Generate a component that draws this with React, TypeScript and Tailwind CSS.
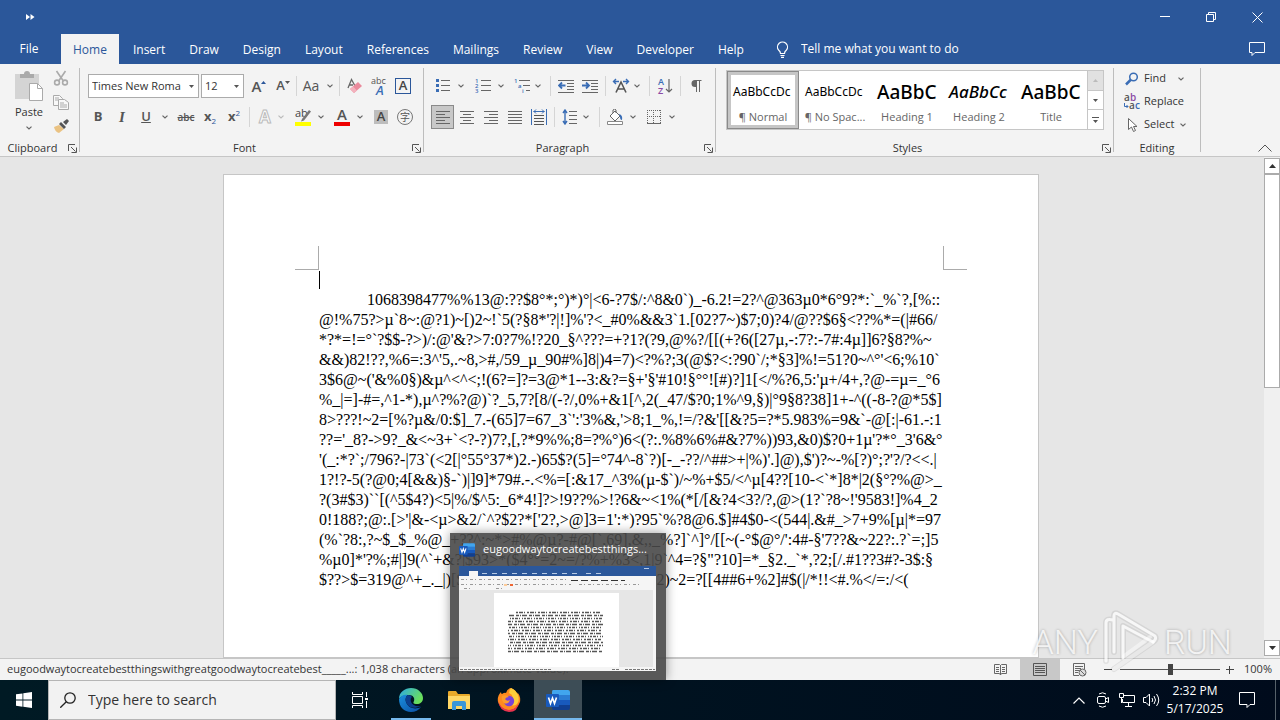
import React from 'react';

const TABS = ['Home', 'Insert', 'Draw', 'Design', 'Layout', 'References', 'Mailings', 'Review', 'View', 'Developer', 'Help'];

const LINES = [
    "1068398477%%13@:??$8°*;°)*)°|<6-?7$/:^8&0`)_-6.2!=2?^@363µ0*6°9?*:`_%`?,[%::",
    "@!%75?>µ`8~:@?1)~[)2~!`5(?§8*'?|!]%'?<_#0%&&3`1.[02?7~)$7;0)?4/@??$6§<??%*=(|#66/",
    "*?*=!=°`?$$-?>)/:@'&?>7:0?7%!?20_§^???=+?1?(?9,@%?/[[(+?6([27µ,-:7?:-7#:4µ]]6?§8?%~",
    "&&)82!??,%6=:3^'5,.~8,>#,/59_µ_90#%]8|)4=7)<?%?;3(@$?<:?90`/;*§3]%!=51?0~^°'<6;%10`",
    "3$6@~('&%0§)&µ^<^<;!(6?=]?=3@*1--3:&?=§+'§'#10!§°°![#)?]1[</%?6,5:'µ+/4+,?@-=µ=_°6",
    "%_|=]-#=,^1-*),µ^?%?@)`?_5,7?[8/(-?/,0%+&1[^,2(_47/$?0;1%^9,§)|°9§8?38]1+-^((-8-?@*5$]",
    "8>???!~2=[%?µ&/0:$]_7.-(65]7=67_3`':'3%&,'>8;1_%,!=/?&'[[&?5=?*5.983%=9&`-@[:|-61.-:1",
    "??='_8?->9?_&<~3+`<?-?)7?,[,?*9%%;8=?%°)6<(?:.%8%6%#&?7%))93,&0)$?0+1µ'?*°_3'6&°",
    "'(_:*?`;/796?-|73`(<2[|°55°37*)2.-)65$?(5]=°74^-8`?)[-_-??/^##>+|%)'.]@),$')?~-%[?)°;?'?/?<<.|",
    "1?!?-5(?@0;4[&&)§-`)|]9]*79#.-.<%=[:&17_^3%(µ-$`)/~%+$5/<^µ[4??[10-<`*]8*|2(§°?%@>_",
    "?(3#$3)``[(^5$4?)<5|%/$^5:_6*4!]?>!9??%>!?6&~<1%(*[/[&?4<3?/?,@>(1?`?8~!'9583!]%4_2",
    "0!188?;@:.[>'|&-<µ>&2/`^?$2?*['2?,>@]3=1':*)?95`%?8@6.$]#4$0-<(544|.&#_>7+9%[µ|*=97",
    "(%`?8:,?~$_$_%@_+??^:~*>#%@µ?-#@[`,69],&,,_%?]`^]°/[[~(-°$@°/':4#-§'7??&~22?:.?`=;]5",
    "%µ0]*'?%;#|]9(^`+&?|$93>*($4°°=2~=/?%+%3<,1|9`^4=?§\"?10]=*_§2._`*,?2;[/.#1??3#?-3$:§",
];

const STYLES = [
    { name: '¶ Normal', sample: 'AaBbCcDc', look: 'text-xs' },
    { name: '¶ No Spac...', sample: 'AaBbCcDc', look: 'text-xs' },
    { name: 'Heading 1', sample: 'AaBbC', look: 'text-[19px] font-medium' },
    { name: 'Heading 2', sample: 'AaBbCc', look: 'text-[17px] font-medium italic' },
    { name: 'Title', sample: 'AaBbC', look: 'text-[19px] font-medium' },
];

function Chevron({ faded = false }: { faded?: boolean }) {
    return (
        <svg width="6" height="4" viewBox="0 0 6 4" fill="none" stroke={faded ? '#bbb' : '#666'} strokeWidth="1.2">
            <path d="M.5.6 3 3 5.5.6" />
        </svg>
    );
}

function More({ label, className = 'w-3', faded }: { label: string; className?: string; faded?: boolean }) {
    return (
        <button aria-label={label} className={`flex h-6 shrink-0 items-center justify-center ${className}`}>
            <Chevron faded={faded} />
        </button>
    );
}

function Tool({ label, className = 'w-6', children }: { label: string; className?: string; children: React.ReactNode }) {
    return (
        <button aria-label={label} className={`flex h-6 shrink-0 items-center justify-center ${className}`}>
            {children}
        </button>
    );
}

function Sep({ className = 'mx-1' }: { className?: string }) {
    return <div className={`h-5 w-px shrink-0 bg-[#d5d5d5] ${className}`} />;
}

function Group({ name, className, launcher = true, children }: { name: string; className: string; launcher?: boolean; children: React.ReactNode }) {
    return (
        <section className={`flex shrink-0 flex-col ${className}`}>
            <div className="h-[76px]">{children}</div>
            <div className="flex h-4 items-center text-[11px] text-[#333]">
                <span className="flex-1 text-center">{name}</span>
                {launcher && (
                    <button aria-label={`${name} settings`} className="flex w-[14px] justify-end pr-[2px]">
                        <svg width="9" height="9" viewBox="0 0 9 9" fill="none" stroke="#555">
                            <path d="M.5 7V.5H7M3 3l4.5 4.5M8.5 3.5v5h-5" />
                        </svg>
                    </button>
                )}
            </div>
        </section>
    );
}

function Divider() {
    return <div className="my-1 w-px shrink-0 bg-[#bdbdbd]" />;
}

// horizontal rules used by the alignment and indent icons: [x1, x2] per row
function Rules({ rows, width = 16, step = 3, children }: { rows: [number, number][]; width?: number; step?: number; children?: React.ReactNode }) {
    return (
        <svg width={width} height="16" viewBox={`0 0 ${width} 16`} fill="none" stroke="#666" strokeWidth="1">
            {rows.map(([a, b], i) => (
                <path key={i} d={`M${a} ${2.5 + i * step}H${b}`} />
            ))}
            {children}
        </svg>
    );
}

function ClipboardGroup() {
    return (
        <Group name="Clipboard" className="w-[79px]">
            <div className="flex pt-[6px] pl-2">
                <button className="flex w-[42px] flex-col items-center text-[11px] text-[#333]">
                    <svg width="30" height="32" viewBox="0 0 30 32" fill="none">
                        <path d="M1 4h24v25H1z" fill="#d4d4d4" />
                        <path d="M6 4h4a3 3 0 0 1 6 0h4v4H6z" fill="#aaa" />
                        <path d="M15.5 13.500h8l5 5v12h-13z" fill="#fff" stroke="#aaa" />
                        <path d="M23.500 13.500v5h5" stroke="#aaa" />
                    </svg>
                    <span className="mt-[2px] leading-4">Paste</span>
                    <span className="mt-[6px]"><Chevron /></span>
                </button>
                <div className="-mt-1 flex flex-col">
                    <Tool label="Cut" className="w-[22px]">
                        <svg width="16" height="16" viewBox="0 0 16 16" fill="none" stroke="#aaa" strokeWidth="1.6">
                            <path d="M3.500 1 10 10.500M12.500 1 6 10.500" />
                            <circle cx="4" cy="12.500" r="2.400" /><circle cx="12" cy="12.500" r="2.400" />
                        </svg>
                    </Tool>
                    <Tool label="Copy" className="w-[22px]">
                        <svg width="16" height="15" viewBox="0 0 16 15" stroke="#aaa" fill="#f8f8f8">
                            <path d="M.5.500h6l3 3v7h-9z" />
                            <path d="M5.500 4.500h6l4 3v7h-10z" />
                            <path d="M7 8h4M7 10h7M7 12h7M2 3h4M2 5h3" />
                        </svg>
                    </Tool>
                    <Tool label="Format Painter" className="w-[22px]">
                        <svg width="16" height="14" viewBox="0 0 16 14">
                            <path d="m1 8 5-2 5 4-5 4q-4-1-5-6z" fill="#eac282" />
                            <path d="m6 5 2-2 5 5-2 2zM10 3l4-3 2 2-3 4z" fill="#555" />
                        </svg>
                    </Tool>
                </div>
            </div>
        </Group>
    );
}

function Combo({ label, value, className }: { label: string; value: string; className: string }) {
    return (
        <div className={`relative h-6 shrink-0 border border-[#ababab] bg-white ${className}`}>
            <select aria-label={label} className="block h-full w-full appearance-none bg-white pl-[3px] text-[11px] text-[#333] outline-none">
                <option>{value}</option>
            </select>
            <svg className="pointer-events-none absolute top-[10px] right-1" width="5" height="3" viewBox="0 0 5 3">
                <path d="M0 0h5L2.500 3z" fill="#555" />
            </svg>
        </div>
    );
}

function FontGroup() {
    return (
        <Group name="Font" className="w-[343px]">
            <div className="flex items-center pt-[10px] pl-2">
                <Combo label="Font" value="Times New Roma" className="w-[111px]" />
                <Combo label="Font size" value="12" className="ml-[2px] w-[43px]" />
                <Tool label="Grow font" className="ml-[3px] w-6 text-[#555]">
                    <span className="text-[15px] font-semibold">A</span>
                    <svg className="mb-2" width="5" height="3" viewBox="0 0 5 3"><path d="M0 3h5L2.500 0z" fill="#2b579a" /></svg>
                </Tool>
                <Tool label="Shrink font" className="w-6 text-[#555]">
                    <span className="text-[13px] font-semibold">A</span>
                    <svg className="mb-2" width="5" height="3" viewBox="0 0 5 3"><path d="M0 0h5L2.500 3z" fill="#555" /></svg>
                </Tool>
                <Sep className="mx-[1px]" />
                <Tool label="Change case" className="w-[26px] text-sm text-[#555]">Aa</Tool>
                <More label="Case options" className="w-3" />
                <Sep className="mx-[3px]" />
                <Tool label="Clear formatting">
                    <svg width="16" height="16" viewBox="0 0 16 16">
                        <path d="M1 10 4.500 1.500 8 8M2.500 7H6" fill="none" stroke="#666" strokeWidth="1.300" />
                        <path d="m3 11 8-7 4 4-8 7z" fill="#ea8a9c" /><path d="m3 11 3-2.500 4 4L7 15z" fill="#f3b2bd" />
                    </svg>
                </Tool>
                <Tool label="Phonetic guide">
                    <svg width="18" height="20" viewBox="0 0 18 20" fontFamily="Open Sans">
                        <text x="1" y="8" fontSize="9" fill="#555">abc</text>
                        <text x="6" y="19" fontSize="13" fontWeight="600" fontStyle="italic" fill="#3a6db5">A</text>
                    </svg>
                </Tool>
                <Tool label="Character border">
                    <span className="flex size-4 items-center justify-center border border-[#2b579a] text-[13px] font-semibold text-[#444]">A</span>
                </Tool>
            </div>
            <div className="flex items-center pt-[7px] pl-[6px] text-[#555]">
                <Tool label="Bold"><b className="text-[13px]">B</b></Tool>
                <Tool label="Italic"><i className="font-['Liberation_Serif'] text-[15px] font-bold">I</i></Tool>
                <Tool label="Underline"><u className="text-[13px] font-semibold">U</u></Tool>
                <More label="Underline options" className="w-[14px]" />
                <Tool label="Strikethrough" className="ml-[2px] w-6"><s className="text-[10px] font-semibold">abc</s></Tool>
                <Tool label="Subscript"><b className="text-[13px]">x</b><span className="mt-2 text-[8px] text-[#2b579a]">2</span></Tool>
                <Tool label="Superscript"><b className="text-[13px]">x</b><span className="mb-2 text-[8px] text-[#2b579a]">2</span></Tool>
                <Sep className="mx-[3px]" />
                <Tool label="Text effects">
                    <svg width="16" height="18" viewBox="0 0 16 18" fontFamily="Open Sans">
                        <text x="2" y="15" fontSize="17" fontWeight="700" fill="#fafafa" stroke="#bbb">A</text>
                    </svg>
                </Tool>
                <More label="Text effect options" className="w-2" faded />
                <Tool label="Highlight" className="ml-[6px] w-6">
                    <svg width="18" height="18" viewBox="0 0 18 18" fontFamily="Open Sans">
                        <text x="1" y="9" fontSize="11" fill="#444">ab</text>
                        <path d="m8 11 7-9 2 1.500-7 9-3 1z" fill="#777" /><path d="M1 14h16v4H1z" fill="#ff0" />
                    </svg>
                </Tool>
                <More label="Highlight colors" />
                <Tool label="Font color" className="ml-[3px] w-6">
                    <svg width="16" height="18" viewBox="0 0 16 18" fontFamily="Open Sans">
                        <text x="3" y="12" fontSize="15" fontWeight="600" fill="#555">A</text><path d="M0 14h16v4H0z" fill="#e00" />
                    </svg>
                </Tool>
                <More label="Font colors" />
                <Tool label="Character shading" className="ml-[3px] w-6">
                    <span className="flex size-[14px] items-center justify-center bg-[#bdbdbd] text-[13px] font-semibold text-[#444]">A</span>
                </Tool>
                <Tool label="Enclose characters">
                    <span className="flex size-4 items-center justify-center rounded-full border border-[#777] font-['Noto_Sans_CJK_SC',sans-serif] text-[10px] leading-none">字</span>
                </Tool>
            </div>
        </Group>
    );
}

function ParagraphGroup() {
    const full: [number, number][] = [[1, 15], [1, 15], [1, 15], [1, 15], [1, 15]];
    return (
        <Group name="Paragraph" className="w-[291px]">
            <div className="flex items-center pt-[10px] pl-[7px]">
                <Tool label="Bullets">
                    <Rules rows={[[6, 15], [6, 15], [6, 15]]} step={5}>
                        <path d="M1 2.500h3M1 7.500h3M1 12.500h3" stroke="#3a6db5" strokeWidth="3" />
                    </Rules>
                </Tool>
                <More label="Bullet library" />
                <Tool label="Numbering" className="ml-1 w-6">
                    <Rules rows={[[6, 16], [6, 16], [6, 16]]} step={5}>
                        <g fill="#3a6db5" stroke="none" fontSize="6" fontFamily="Open Sans" fontWeight="600">
                            <text x="0" y="5">1</text><text x="0" y="10">2</text><text x="0" y="15">3</text>
                        </g>
                    </Rules>
                </Tool>
                <More label="Number library" />
                <Tool label="Multilevel list" className="ml-[3px] w-6">
                    <Rules rows={[[5, 16], [9, 16], [12, 16]]} step={5}>
                        <g fill="#3a6db5" stroke="none" fontSize="6" fontFamily="Open Sans" fontWeight="600">
                            <text x="0" y="5">1</text><text x="4" y="10">a</text><text x="8" y="15">i</text>
                        </g>
                    </Rules>
                </Tool>
                <More label="List library" className="w-2" />
                <Sep className="ml-2 mr-[3px]" />
                <Tool label="Decrease indent">
                    <Rules rows={[[0, 16], [9, 16], [9, 16], [9, 16], [0, 16]]}>
                        <path d="M7.500 7.500H1M4 4.500l-3 3 3 3" stroke="#3a6db5" strokeWidth="1.800" />
                    </Rules>
                </Tool>
                <Tool label="Increase indent">
                    <Rules rows={[[0, 16], [9, 16], [9, 16], [9, 16], [0, 16]]}>
                        <path d="M0 7.500h6.500M4 4.500l3 3-3 3" stroke="#3a6db5" strokeWidth="1.800" />
                    </Rules>
                </Tool>
                <Sep className="mx-[3px]" />
                <Tool label="Asian layout">
                    <svg width="18" height="16" viewBox="0 0 18 16" fill="none">
                        <path d="M7 3.500H1.500M4 1 1.500 3.500 4 6M11 3.500h5.500M14 1l2.500 2.500L14 6" stroke="#3a6db5" strokeWidth="1.400" />
                        <path d="M4 14.500 9 4l5 10.500M6 11h6" stroke="#555" strokeWidth="1.600" />
                    </svg>
                </Tool>
                <More label="Asian layout options" className="w-2" />
                <Sep className="mr-[3px] ml-2" />
                <Tool label="Sort">
                    <svg width="16" height="18" viewBox="0 0 16 18" fill="none" fontFamily="Open Sans" fontWeight="600">
                        <text x="1" y="8" fontSize="9" fill="#3a6db5">A</text><text x="1" y="17" fontSize="9" fill="#8a4aa5">Z</text>
                        <path d="M12 2v13M9 12l3 3 3-3" stroke="#666" strokeWidth="1.200" />
                    </svg>
                </Tool>
                <Sep className="mx-[3px]" />
                <Tool label="Show marks">
                    <svg width="12" height="14" viewBox="0 0 12 14"><path d="M11.500 1H5a3.500 3.500 0 0 0 0 7h1v5h1V2h2v11h1V2h1.500z" fill="#666" /></svg>
                </Tool>
            </div>
            <div className="flex items-center pt-[7px] pl-[7px]">
                <Tool label="Align left" className="w-[23px] border border-[#8a8a8a] bg-[#c8c8c8]"><Rules rows={[[1, 15], [1, 10], [1, 15], [1, 10], [1, 15]]} /></Tool>
                <Tool label="Center" className="ml-px w-6"><Rules rows={[[1, 15], [4, 12], [1, 15], [4, 12], [1, 15]]} /></Tool>
                <Tool label="Align right"><Rules rows={[[1, 15], [6, 15], [1, 15], [6, 15], [1, 15]]} /></Tool>
                <Tool label="Justify"><Rules rows={full} /></Tool>
                <Tool label="Distribute">
                    <svg width="16" height="16" viewBox="0 0 16 16" fill="none" stroke="#3a6db5">
                        <path d="M.500 0v16M15.500 0v16M2.500 2.500h11M5 .500l-2 2 2 2M11 .500l2 2-2 2" />
                        <path d="M3 6.500h10M3 9.500h10M3 12.500h10M3 15.500h10" stroke="#555" />
                    </svg>
                </Tool>
                <Sep className="mx-[3px]" />
                <Tool label="Line spacing">
                    <Rules rows={[[7, 15], [7, 15], [7, 15], [7, 15]]} step={4}>
                        <path d="M3 1v14M1 4l2-3 2 3M1 12l2 3 2-3" stroke="#3a6db5" strokeWidth="1.400" />
                    </Rules>
                </Tool>
                <More label="Line spacing options" className="w-2" />
                <Sep className="mr-[3px] ml-[9px]" />
                <Tool label="Shading">
                    <svg width="18" height="16" viewBox="0 0 18 16" fill="none">
                        <path d="M4 7 9 2l5 5-5 5zM7 4V1q2-2 3 0v3" fill="#fff" stroke="#666" />
                        <path d="M13 5q4 1 3 6-2 0-2-3z" fill="#3a6db5" /><path d="M1.500 12.500h15v3h-15z" fill="#fff" stroke="#888" />
                    </svg>
                </Tool>
                <More label="Shading colors" />
                <Tool label="Borders" className="ml-[3px] w-6">
                    <svg width="14" height="14" viewBox="0 0 14 14" fill="none" stroke="#666" strokeDasharray="1 1">
                        <path d="M0 .500h14M0 6.500h14M.500 0v13M6.500 0v13M13.500 0v13" /><path d="M0 13.500h14" strokeDasharray="none" />
                    </svg>
                </Tool>
                <More label="Border options" />
            </div>
        </Group>
    );
}

function StylesGroup() {
    return (
        <Group name="Styles" className="w-[397px]">
            <div className="flex pt-[6px] pl-[10px]">
                <div className="flex h-[60px] w-[378px] border border-[#c6c6c6] bg-white">
                    {STYLES.map((s, i) => (
                        <button key={s.name} className={`flex w-[72px] shrink-0 flex-col px-1 ${i === 0 ? 'outline-3 -outline-offset-4 outline-[#c6c6c6] ring-1 ring-[#8a8a8a] ring-inset' : ''}`}>
                            <span className={`flex h-[38px] w-full items-center overflow-hidden whitespace-nowrap pt-1 pl-[2px] font-['Noto_Sans'] text-black ${s.look}`}>{s.sample}</span>
                            <span className="w-full text-center text-[11px] leading-4 whitespace-nowrap text-[#666]">{s.name}</span>
                        </button>
                    ))}
                    <div className="flex w-4 flex-col border-l border-[#c6c6c6]">
                        <button aria-label="Previous styles" className="flex flex-1 items-center justify-center bg-[#e1e1e1]">
                            <svg width="5" height="3" viewBox="0 0 5 3"><path d="M0 3h5L2.500 0z" fill="#bbb" /></svg>
                        </button>
                        <button aria-label="Next styles" className="flex flex-1 items-center justify-center border-y border-[#c6c6c6]">
                            <svg width="5" height="3" viewBox="0 0 5 3"><path d="M0 0h5L2.500 3z" fill="#555" /></svg>
                        </button>
                        <button aria-label="All styles" className="flex flex-1 items-center justify-center">
                            <svg width="7" height="6" viewBox="0 0 7 6"><path d="M0 0h7v1H0zM1 3h5L3.500 6z" fill="#555" /></svg>
                        </button>
                    </div>
                </div>
            </div>
        </Group>
    );
}

function EditingGroup() {
    return (
        <Group name="Editing" className="w-[86px]" launcher={false}>
            <div className="flex flex-col pt-[3px] pl-[10px] text-[11px] text-[#333]">
                <button className="flex h-[23px] items-center">
                    <svg width="16" height="14" viewBox="0 0 16 14" fill="none" stroke="#3a6db5">
                        <circle cx="9.500" cy="5" r="3.800" strokeWidth="1.500" /><path d="m7 7.500-5 5" strokeWidth="2.500" />
                    </svg>
                    <span className="ml-[4px] w-[34px] text-left">Find</span>
                    <Chevron />
                </button>
                <button className="flex h-[23px] items-center">
                    <svg width="16" height="18" viewBox="0 0 16 18" fontFamily="Open Sans" fontSize="10" fontWeight="600">
                        <text x="0" y="8" fill="#555">a</text><text x="6" y="8" fill="#8a4aa5">b</text>
                        <text x="5" y="16" fill="#555">a</text><text x="11" y="16" fill="#3a6db5">c</text>
                        <path d="M.500 10v3.500H4M2.500 12 4 13.500 2.500 15" fill="none" stroke="#3a6db5" />
                    </svg>
                    <span className="ml-[4px]">Replace</span>
                </button>
                <button className="flex h-[23px] items-center">
                    <svg width="16" height="16" viewBox="0 0 16 16" fill="#fff" stroke="#666">
                        <path d="M4.500 1.500v11l3-2.500 2 4.500 2-1-2-4h3.500z" />
                    </svg>
                    <span className="ml-[4px] w-[36px] text-left">Select</span>
                    <Chevron />
                </button>
            </div>
        </Group>
    );
}

function TitleBar() {
    return (
        <header className="bg-[#2b579a] text-white">
            <div className="flex h-[34px] items-center">
                <button aria-label="Customize toolbar" className="ml-[26px]">
                    <svg width="9" height="6" viewBox="0 0 9 6"><path d="m0 0 4 3-4 3zM4.500 0l4 3-4 3z" fill="#fff" /></svg>
                </button>
                <div className="ml-auto flex h-[30px] text-white">
                    <button aria-label="Minimize" className="flex w-[46px] items-center justify-center">
                        <svg width="10" height="10" viewBox="0 0 10 10" stroke="#fff"><path d="M0 4.500h10" /></svg>
                    </button>
                    <button aria-label="Restore" className="flex w-[46px] items-center justify-center">
                        <svg width="10" height="10" viewBox="0 0 10 10" stroke="#fff" fill="none"><path d="M.500 2.500h7v7h-7zM2.500 2.500v-2h7v7h-2" /></svg>
                    </button>
                    <button aria-label="Close" className="flex w-[46px] items-center justify-center">
                        <svg width="11" height="11" viewBox="0 0 11 11" stroke="#fff"><path d="m.500.500 10 10M10.500.500l-10 10" /></svg>
                    </button>
                </div>
            </div>
            <nav className="flex h-[30px] items-center text-xs">
                <button className="h-full w-[58px]">File</button>
                <div className="ml-[3px] flex h-full">
                    {TABS.map((tab, i) => (
                        <button key={tab} className={`h-full px-3 pt-px ${i === 0 ? 'mr-[2px] bg-[#f3f3f3] text-[#2b579a]' : ''}`}>{tab}</button>
                    ))}
                </div>
                <label className="flex items-center pl-5">
                    <svg width="13" height="17" viewBox="0 0 13 17" fill="none" stroke="#fff" strokeWidth="1.200">
                        <path d="M4.500 12.500q0-2-2-3.500a5 5 0 1 1 8 0q-2 1.500-2 3.500zM4.500 14.500h4M5 16.400h3" />
                    </svg>
                    <input aria-label="Tell me" placeholder="Tell me what you want to do" className="ml-3 w-[180px] bg-transparent text-xs outline-none placeholder:text-white" />
                </label>
                <button aria-label="Comments" className="mr-[15px] ml-auto">
                    <svg width="16" height="14" viewBox="0 0 16 14" fill="none" stroke="#fff"><path d="M.500.500h15v10H6l-3 3v-3H.500z" /></svg>
                </button>
            </nav>
        </header>
    );
}

function Document() {
    return (
        <main className="flex min-h-0 flex-1 bg-[#e6e6e6]">
            <div className="min-w-0 flex-1 overflow-hidden pt-[17px] pr-[2px]">
                <article className="mx-auto min-h-full w-[816px] border border-[#c6c6c6] bg-white pt-[71px]">
                    <div className="flex justify-between px-[71px]">
                        <span className="size-6 border-r border-b border-[#ababab]" />
                        <span className="size-6 border-b border-l border-[#ababab]" />
                    </div>
                    <div className="px-[95px] font-['Liberation_Serif',serif] text-base leading-5 whitespace-nowrap text-black">
                        <div className="h-5 pt-px"><div className="h-[18px] w-px bg-black" /></div>
                        <p className="indent-12">
                            {LINES.map((line) => (
                                <React.Fragment key={line}>{line}<br /></React.Fragment>
                            ))}
                            {'$??>$=319@^+_._|)[$'}
                            <span className="inline-block w-[192px] indent-0" />
                            {'2)~2=?[[4##6+%2]#$(|/*!!<#.%</=:/<('}
                        </p>
                    </div>
                </article>
            </div>
            <div className="flex w-4 flex-col bg-[#f0f0f0] pt-px">
                <button aria-label="Scroll up" className="flex h-4 items-center justify-center border border-[#ababab] bg-white">
                    <svg width="7" height="4" viewBox="0 0 7 4"><path d="M0 4h7L3.500 0z" fill="#333" /></svg>
                </button>
                <div className="h-[214px] border border-[#ababab] bg-white" />
                <button aria-label="Scroll down" className="mt-auto mb-[2px] flex h-4 items-center justify-center border border-[#ababab] bg-white">
                    <svg width="7" height="4" viewBox="0 0 7 4"><path d="M0 0h7L3.500 4z" fill="#333" /></svg>
                </button>
            </div>
        </main>
    );
}

function StatusBar() {
    return (
        <footer className="flex h-[22px] shrink-0 items-center border-t border-[#c6c6c6] bg-[#f3f3f3] pl-[7px] text-[11px] text-[#333]">
            <span className="whitespace-nowrap">eugoodwaytocreatebestthingswithgreatgoodwaytocreatebest_____...: 1,038 characters (an approximate value).</span>
            <div className="ml-auto flex h-full items-center">
                <button aria-label="Read mode" className="flex h-full w-10 items-center justify-center">
                    <svg width="13" height="13" viewBox="0 0 13 13" fill="none" stroke="#666">
                        <path d="M.500 1.500h5l1 1 1-1h5v9h-5l-1 1.500-1-1.500h-5zM6.500 2v10M2 4.500h3M2 6.500h3M2 8.500h3M8 4.500h3M8 6.500h3M8 8.500h3" />
                    </svg>
                </button>
                <button aria-label="Print layout" className="flex h-full w-10 items-center justify-center bg-[#c8c8c8]">
                    <svg width="14" height="13" viewBox="0 0 14 13" fill="none" stroke="#555"><path d="M.500.500h13v12H.500zM2 3.500h10M2 5.500h10M2 7.500h10M2 9.500h10" /></svg>
                </button>
                <button aria-label="Web layout" className="flex h-full w-10 items-center justify-center">
                    <svg width="14" height="14" viewBox="0 0 14 14" fill="none" stroke="#666">
                        <path d="M6 12.500H.500V.500h11V6M2 3.500h8M2 5.500h6M2 7.500h4M2 9.500h3" /><circle cx="9.500" cy="9.500" r="3.500" fill="#ddd" /><path d="m7 7 5 5" />
                    </svg>
                </button>
                <button aria-label="Zoom out" className="w-4 text-center">
                    <svg className="mx-auto" width="8" height="8" viewBox="0 0 8 8" stroke="#444"><path d="M0 3.500h8" /></svg>
                </button>
                <input
                    type="range"
                    aria-label="Zoom"
                    defaultValue={50}
                    className="mx-1 h-[11px] w-[100px] appearance-none bg-[linear-gradient(#555,#555)] bg-[length:100%_1px] bg-center bg-no-repeat [&::-webkit-slider-thumb]:h-[11px] [&::-webkit-slider-thumb]:w-[5px] [&::-webkit-slider-thumb]:appearance-none [&::-webkit-slider-thumb]:bg-[#444]"
                />
                <button aria-label="Zoom in" className="w-3">
                    <svg className="mx-auto" width="8" height="8" viewBox="0 0 8 8" stroke="#444"><path d="M0 3.500h8M3.500 0v8" /></svg>
                </button>
                <button className="w-11 pr-2 text-right">100%</button>
            </div>
        </footer>
    );
}

function WordLogo({ size }: { size: number }) {
    return (
        <svg className="shrink-0" width={size} height={size} viewBox="0 0 24 24">
            <path d="M7 2h15q2 0 2 2v4H6V4q0-2 1-2z" fill="#41a5ee" />
            <path d="M6 7h18v5H6z" fill="#2b7cd3" /><path d="M6 12h18v5H6z" fill="#185abd" /><path d="M6 17h18v3q0 2-2 2H8q-2 0-2-2z" fill="#103f91" />
            <rect y="6" width="13" height="13" rx="1" fill="#185abd" />
            <path d="m2.500 9.500 2 6 2-5.500 2 5.500 2-6" fill="none" stroke="#fff" strokeWidth="1.600" />
        </svg>
    );
}

function WindowPreview() {
    return (
        <div className="absolute bottom-0 left-[450px] flex h-[147px] w-[216px] flex-col bg-[#484848]/90 px-[9px] shadow-[0_0_10px_rgba(0,0,0,0.4)]">
            <div className="flex h-[33px] items-center text-[11px] text-white">
                <WordLogo size={16} />
                <span className="ml-2 whitespace-nowrap">eugoodwaytocreatebestthings...</span>
            </div>
            <svg width="197" height="105" viewBox="0 0 197 105">
                <path d="M0 0h197v105H0z" fill="#e6e6e6" /><path d="M0 0h197v10H0z" fill="#2b579a" />
                <path d="M10 5h9v5h-9zM0 10h197v14H0z" fill="#f5f5f5" /><path d="M35 27h125v74H35z" fill="#fff" /><path d="M0 101h197v4H0zM194 24h3v77h-3z" fill="#f5f5f5" />
                <path d="M23 7.500h95M127 7.500h20M185 2.500h10" stroke="#b8cae4" strokeDasharray="5 5" />
                <path d="M2 13.500h106M2 18.500h110M120 18.500h60M5 22.500h6M37 22.500h6" stroke="#999" strokeDasharray="3 2 1 3" />
                <path d="M112 14.500h54" stroke="#333" strokeDasharray="7 3" />
                <path d="M45 18h3v2h-3z" fill="#fc9" /><path d="M51 18h3v2h-3z" fill="#e63" />
                {LINES.map((line, i) => (
                    <path key={line} d={`M${i === 0 ? 57 : 49} ${46.500 + i * 3}H${i % 3 ? 144 : 142}`} stroke="#555" strokeWidth="1.500" strokeDasharray={['2 1 4 1 1 2', '3 1 1 1 5 2', '1 1 2 1 3 1 1 2'][i % 3]} strokeDashoffset={i * 5} />
                ))}
                <path d="M1 103.500h92M153 103.500h8M166 103.500h30" stroke="#777" strokeDasharray="3 1" />
            </svg>
        </div>
    );
}

function Watermark() {
    return (
        <div className="pointer-events-none absolute right-12 bottom-[6px] flex items-center gap-1 font-['Roboto',sans-serif] text-[34px] leading-none font-light text-white/80 [text-shadow:0_0_3px_rgba(0,0,0,0.3)]">
            <span>ANY</span>
            <svg width="58" height="64" viewBox="0 0 58 64" fill="none" strokeLinejoin="round" strokeLinecap="round">
                <g stroke="#000" strokeOpacity=".07" strokeWidth="6">
                    <path d="M11 10Q4 8 4 13v38M12 42V6q0-4 4-2l37 22q2 3-2 6M21 16v32M21 16l30 16L12 59" />
                </g>
                <g stroke="#fff" strokeOpacity=".8" strokeWidth="3">
                    <path d="M11 10Q4 8 4 13v38M12 42V6q0-4 4-2l37 22q2 3-2 6" /><path d="M51 32 21 16v32" />
                </g>
                <path d="M51 32 12 59M48 27 22 46" stroke="#fff" strokeOpacity=".45" strokeWidth="4" />
            </svg>
            <span>RUN</span>
        </div>
    );
}

function TaskButton({ label, className = '', children }: { label: string; className?: string; children: React.ReactNode }) {
    return (
        <button aria-label={label} className={`flex h-full w-12 shrink-0 items-center justify-center ${className}`}>
            {children}
        </button>
    );
}

function Taskbar() {
    return (
        <div className="flex h-10 shrink-0 items-center bg-linear-to-r from-[#001a24] to-[#000b1c] text-white">
            <TaskButton label="Start">
                <svg width="16" height="16" viewBox="0 0 16 16" fill="#fff"><path d="m0 2.300 6.500-.900v6.200H0zM7.300 1.300 16 0v7.600H7.300zM0 8.400h6.500v6.300L0 13.800zM7.300 8.400H16V16l-8.700-1.200z" /></svg>
            </TaskButton>
            <label className="flex h-full w-72 items-center border border-[#b5b5b5] bg-[#f2f2f2] pl-[11px]">
                <svg width="16" height="16" viewBox="0 0 16 16" fill="none" stroke="#222" strokeWidth="1.300"><circle cx="10" cy="6" r="5.200" /><path d="m6.300 9.700-6 6" /></svg>
                <input aria-label="Search" placeholder="Type here to search" className="ml-3 w-[200px] bg-transparent text-sm text-black outline-none placeholder:text-[#333]" />
            </label>
            <TaskButton label="Task view">
                <svg width="16" height="16" viewBox="0 0 16 16" fill="none" stroke="#fff"><path d="M.500 4.500h10v7H.500zM.500 0v2.500h10V0M.500 16v-2.500h10V16M14.500 0v5M14.500 9v7" /><path d="M13 6h3v2h-3z" fill="#fff" stroke="none" /></svg>
            </TaskButton>
            <TaskButton label="Edge" className="relative ml-[3px]">
                <svg width="26" height="26" viewBox="0 0 26 26">
                    <defs>
                        <linearGradient id="edge" x1="0" y1="0" x2="1" y2=".5"><stop offset="0" stopColor="#2ba8e8" /><stop offset="1" stopColor="#6be05a" /></linearGradient>
                        <linearGradient id="edge2" x1="0" y1="0" x2="1" y2="1"><stop offset="0" stopColor="#1b8fdd" /><stop offset="1" stopColor="#0a4fa5" /></linearGradient>
                    </defs>
                    <path d="M1 12C1 5 7 1 13 1c7 0 12 5 12 10 0 4-3 6-6 6-4 0-4-1-3-3 1-3-1-6-5-6-5 0-9 2-10 4z" fill="url(#edge)" />
                    <path d="M1 12c2-4 6-5 9-4-3 2-3 6-1 9 2 4 8 6 14 3-2 3-6 5-10 5C6 25 1 20 1 12z" fill="url(#edge2)" />
                    <path d="M10 8c-3 2-3 6-1 9 2 4 8 5 14 2q-8 1-10-4-1-4 1-5-1-2-4-2z" fill="#0c3f8e" />
                </svg>
                <span className="absolute inset-x-1 bottom-0 h-[2px] bg-[#76b9ed]" />
            </TaskButton>
            <TaskButton label="File Explorer">
                <svg width="22" height="20" viewBox="0 0 22 20">
                    <path d="M0 2q0-1 1-1h7l2 3h11q1 0 1 1v14H0z" fill="#e8a92a" /><path d="M0 6h22v13H0z" fill="#ffd766" />
                    <path d="M4 20v-7q0-2 2-2h10q2 0 2 2v7h-4v-4H8v4z" fill="#3a96d8" />
                </svg>
            </TaskButton>
            <TaskButton label="Firefox" className="ml-[2px]">
                <svg width="24" height="24" viewBox="0 0 24 24">
                    <path d="M14 0q5 2 6 6 1-1 0-2 4 4 3 10a11.500 11.500 0 0 1-22 0Q0 8 4 4q0 2 1 2 3-2 4-1Q10 1 14 0z" fill="#ff8a1e" />
                    <path d="M14 0q5 2 7 7 2 5-1 9-4 3-7 0Q19 8 12 5q0-3 2-5z" fill="#ffce3a" />
                    <path d="M1 12q2 9 11 10 8-1 10-8-1 10-10 10Q2 23 1 12z" fill="#e8344e" />
                    <circle cx="12" cy="13" r="5.200" fill="#7a43d6" /><path d="M5 8q4-2 7 1-3 0-4 2 2 3 5 1-2 5-6 3-3-3-2-7z" fill="#ff9d2b" />
                </svg>
            </TaskButton>
            <TaskButton label="Word" className="relative ml-px bg-[#3d4d56]">
                <WordLogo size={24} />
                <span className="absolute inset-x-0 bottom-0 h-[2px] bg-[#76b9ed]" />
            </TaskButton>
            <div className="ml-auto flex h-full items-center">
                <button aria-label="Hidden icons" className="flex w-6 justify-center">
                    <svg width="12" height="7" viewBox="0 0 12 7" fill="none" stroke="#fff" strokeWidth="1.200"><path d="m.500 6.500 5.500-5.500 5.500 5.500" /></svg>
                </button>
                <button aria-label="Meet now" className="flex w-6 justify-center">
                    <svg width="12" height="16" viewBox="0 0 12 16" fill="none" stroke="#fff"><rect x=".500" y="4.500" width="8" height="7" rx="1.500" /><path d="m8.500 7 3-1.500v5L8.500 9M2 2q3.500-2.500 7 0M2 14q3.500 2.500 7 0" /></svg>
                </button>
                <button aria-label="Network" className="flex w-6 justify-center">
                    <svg width="16" height="14" viewBox="0 0 16 14" fill="none" stroke="#fff"><path d="M5 2.500h10.500v7H3.500V6M9.500 10v3M6 13.500h7M.500.500h4v4h-4zM2.500 5v5" /></svg>
                </button>
                <button aria-label="Volume" className="flex w-6 justify-center">
                    <svg width="17" height="14" viewBox="0 0 17 14" fill="none" stroke="#fff"><path d="M.500 4.500H3l3.500-3.500v12L3 9.500H.500zM9 5q1.500 2 0 4M11 3q3 4 0 8M13.500 1q4.500 6 0 12" /></svg>
                </button>
                <button className="w-16 text-center text-xs leading-[18px]">2:32 PM<br />5/17/2025</button>
                <button aria-label="Notifications" className="flex w-10 justify-center">
                    <svg width="16" height="16" viewBox="0 0 16 16" fill="none" stroke="#fff"><path d="M.500.500h15v12H11l-3 3v-3H.500z" /></svg>
                </button>
                <button aria-label="Show desktop" className="ml-2 h-full w-[5px] border-l border-[#56616a]" />
            </div>
        </div>
    );
}

export default function App() {
    return (
        <div className="flex h-screen min-w-[1210px] flex-col overflow-hidden font-['Open_Sans','Noto_Sans',sans-serif]">
            <div className="relative flex min-h-0 flex-1 flex-col">
                <TitleBar />
                <div className="flex h-[93px] shrink-0 border-b border-[#c6c6c6] bg-[#f3f3f3]">
                    <ClipboardGroup />
                    <Divider />
                    <FontGroup />
                    <Divider />
                    <ParagraphGroup />
                    <Divider />
                    <StylesGroup />
                    <Divider />
                    <EditingGroup />
                    <Divider />
                    <button aria-label="Collapse ribbon" className="mt-auto mr-2 mb-1 ml-auto">
                        <svg width="14" height="8" viewBox="0 0 14 8" fill="none" stroke="#555"><path d="m.500 7.500 6.500-6.500 6.500 6.500" /></svg>
                    </button>
                </div>
                <Document />
                <StatusBar />
                <WindowPreview />
                <Watermark />
            </div>
            <Taskbar />
        </div>
    );
}
